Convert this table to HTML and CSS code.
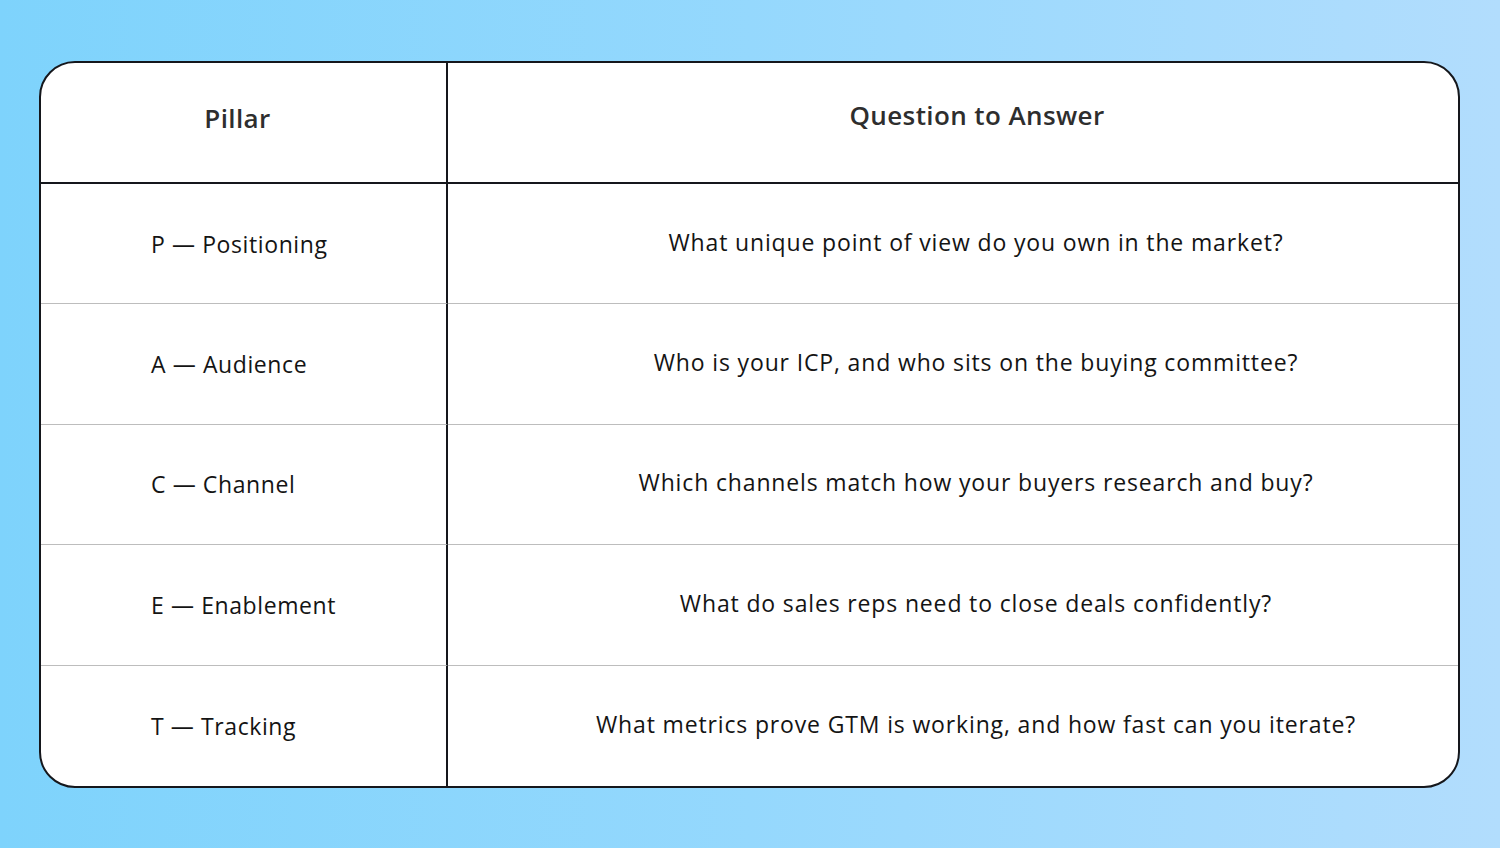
FILE: index.html
```html
<!DOCTYPE html>
<html lang="en">
<head>
<meta charset="utf-8">
<title>GTM Pillars</title>
<link rel="stylesheet" href="styles.css">
</head>
<body>
<main class="stage">
  <div class="card">
    <div class="cell head left"><span class="head-pillar">Pillar</span></div>
    <div class="cell head right"><span class="head-question">Question to Answer</span></div>

    <div class="cell left body">P — Positioning</div>
    <div class="cell right body">What unique point of view do you own in the market?</div>

    <div class="cell left body">A — Audience</div>
    <div class="cell right body">Who is your ICP, and who sits on the buying committee?</div>

    <div class="cell left body">C — Channel</div>
    <div class="cell right body">Which channels match how your buyers research and buy?</div>

    <div class="cell left body">E — Enablement</div>
    <div class="cell right body">What do sales reps need to close deals confidently?</div>

    <div class="cell left body last">T — Tracking</div>
    <div class="cell right body last">What metrics prove GTM is working, and how fast can you iterate?</div>
  </div>
</main>
</body>
</html>
```

FILE: styles.css
```css
* { box-sizing: border-box; }
html, body { margin: 0; padding: 0; }
body {
  width: 1500px;
  height: 848px;
  overflow: hidden;
  background: linear-gradient(90deg, #7ed3fc 0%, #95d8fd 50%, #b2ddfd 100%);
  font-family: "Open Sans", "Liberation Sans", sans-serif;
}
.stage {
  padding: 61px 0 0 39px;
}
.card {
  width: 1421px;
  height: 727px;
  background: #fff;
  border: 2px solid #15171c;
  border-radius: 36px;
  overflow: hidden;
  display: grid;
  grid-template-columns: 407px 1fr;
  grid-template-rows: 121px repeat(5, 1fr);
}
.cell {
  display: flex;
  align-items: center;
  border-bottom: 1.5px solid #bdbdbd;
}
.cell.left {
  border-right: 2px solid #15171c;
}
.cell.head {
  border-bottom: 2px solid #15171c;
  justify-content: center;
  color: #2e2e2e;
  font-weight: 600;
  font-size: 26px;
  letter-spacing: 0.4px;
  padding-bottom: 16px;
}
.head-pillar { margin-left: -12px; margin-top: 6px; }
.head-question { margin-left: 48px; }
.cell.body {
  font-size: 23px;
  color: #141414;
  letter-spacing: 0.85px;
}
.cell.left.body {
  padding-left: 110px;
  letter-spacing: 0.6px;
}
.cell.right.body {
  justify-content: center;
  padding-left: 46px;
  padding-bottom: 4px;
}
.cell.last { border-bottom: none; }
```
